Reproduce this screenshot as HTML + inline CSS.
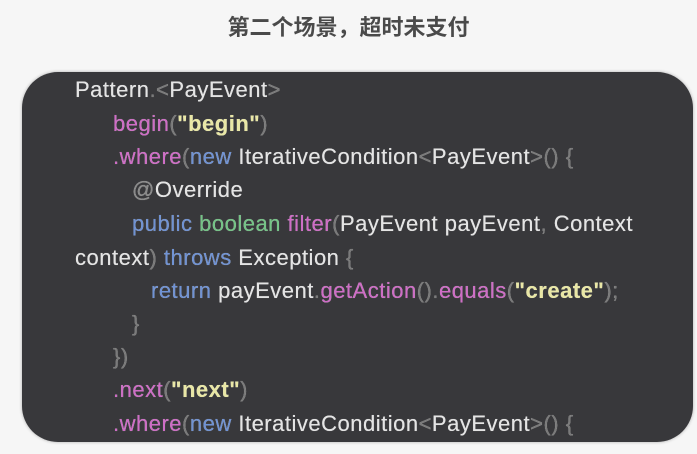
<!DOCTYPE html>
<html><head><meta charset="utf-8"><style>
body{margin:0;width:697px;height:454px;background:#f6f6f6;overflow:hidden;position:relative;font-family:"Liberation Sans","Noto Sans CJK SC",sans-serif}
.t{position:absolute;left:0;width:697px;top:12px;text-align:center;font-size:22px;font-weight:bold;color:#4a4a4a;font-family:"Noto Sans CJK SC",sans-serif;line-height:28px}
.box{position:absolute;left:22px;top:72px;width:671px;height:370px;background:#38383b;border-radius:36px;box-shadow:0 0 3px rgba(0,0,0,.3)}
.l{position:absolute;font-size:22px;letter-spacing:0.5px;color:#e4e4e4;white-space:pre;line-height:24px;text-shadow:0 0 0.4px #e4e4e4}
.m{color:#cf6cc6}.b{color:#6f92d4}.g{color:#74c486}.y{color:#e9e7a6;font-weight:bold}.p{color:#7a7a7a}.a{color:#8a8a8a}
</style></head><body>
<div class="t">第二个场景，超时未支付</div>
<div class="box"></div>
<div class="l" style="left:75px;top:78px">Pattern<span class="p">.&lt;</span>PayEvent<span class="p">&gt;</span></div>
<div class="l" style="left:113px;top:112px"><span class="m">begin</span><span class="p">(</span><span class="y">"begin"</span><span class="p">)</span></div>
<div class="l" style="left:113px;top:145px"><span class="m">.where</span><span class="p">(</span><span class="b">new</span> IterativeCondition<span class="p">&lt;</span>PayEvent<span class="p">&gt;() {</span></div>
<div class="l" style="left:132px;top:178px"><span class="a">@</span>Override</div>
<div class="l" style="left:132px;top:212px"><span class="b">public</span> <span class="g">boolean</span> <span class="m">filter</span><span class="p">(</span>PayEvent payEvent<span class="p">,</span> Context</div>
<div class="l" style="left:75px;top:246px">context<span class="p">)</span> <span class="b">throws</span> Exception <span class="p">{</span></div>
<div class="l" style="left:151px;top:279px"><span class="b">return</span> payEvent<span class="p">.</span><span class="m">getAction</span><span class="p">().</span><span class="m">equals</span><span class="p">(</span><span class="y">"create"</span><span class="p">);</span></div>
<div class="l" style="left:132px;top:312px"><span class="p">}</span></div>
<div class="l" style="left:113px;top:345px"><span class="p">})</span></div>
<div class="l" style="left:113px;top:378px"><span class="m">.next</span><span class="p">(</span><span class="y">"next"</span><span class="p">)</span></div>
<div class="l" style="left:113px;top:412px"><span class="m">.where</span><span class="p">(</span><span class="b">new</span> IterativeCondition<span class="p">&lt;</span>PayEvent<span class="p">&gt;() {</span></div>
</body></html>
